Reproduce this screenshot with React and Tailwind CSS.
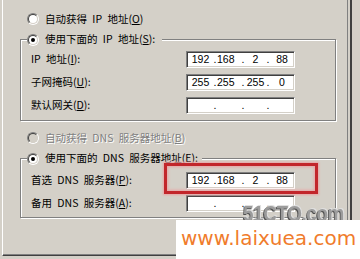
import React from "react";

// Win2000-style TCP/IP properties panel with a red annotation and watermarks

const Radio = ({ checked, disabled }) => (
  <span className="flex h-[12px] w-[12px] shrink-0 rounded-full border border-t-[#808080] border-l-[#808080] border-r-white border-b-white">
    <span
      className={
        disabled
          ? "flex h-full w-full items-center justify-center rounded-full border border-t-[#404040] border-l-[#404040] border-r-[#d4d0c8] border-b-[#d4d0c8] bg-[#d4d0c8]"
          : "flex h-full w-full items-center justify-center rounded-full border border-t-[#404040] border-l-[#404040] border-r-[#d4d0c8] border-b-[#d4d0c8] bg-white"
      }
    >
      {checked && <span className="h-[4px] w-[4px] rounded-full bg-black" />}
    </span>
  </span>
);

const Acc = ({ text, k, tail = "" }) => (
  <span className="whitespace-nowrap [word-spacing:3px]">
    {text}(<span className="underline underline-offset-1">{k}</span>){tail}
  </span>
);

const IpBox = ({ parts }) => {
  const v = parts || ["", "", "", ""];
  return (
    <div className="flex h-[17px] w-[109px] shrink-0 items-center border border-t-[#808080] border-l-[#808080] border-r-white border-b-white bg-white pl-[1px] font-['Liberation_Sans',sans-serif] text-[10.5px] leading-none text-black shadow-[inset_1px_1px_0_#404040,inset_-1px_-1px_0_#d4d0c8]">
      <span className="w-[25px] text-center">{v[0]}</span>
      <span className="w-[4px] text-center">.</span>
      <span className="w-[16px] text-center">{v[1]}</span>
      <span className="w-[8px]" />
      <span className="w-[4px] text-center">.</span>
      <span className="w-[21px] text-center">{v[2]}</span>
      <span className="w-[4px] text-center">.</span>
      <span className="w-[24px] text-center">{v[3]}</span>
    </div>
  );
};

const Row = ({ label, parts }) => (
  <div className="flex h-[17px] items-center">
    <div className="w-[155px] leading-none">{label}</div>
    <IpBox parts={parts} />
  </div>
);

const App = () => {
  return (
    <div className="relative flex h-[259px] w-[360px] overflow-hidden bg-[#d4d0c8] font-['Noto_Sans_CJK_SC',sans-serif] text-[10.5px] text-black">
      <div className="ml-[2px] flex h-[256px] w-[346px] flex-col border-b border-l border-r border-b-[#404040] border-l-white border-r-[#808080] shadow-[inset_0_-1px_0_#808080]">
        <div className="mt-[12px] flex h-[14px] items-center gap-[6px] pl-[24px] leading-none">
          <Radio />
          <Acc text="自动获得 IP 地址" k="O" />
        </div>

        <fieldset className="ml-[17px] mt-[6px] w-[316px] border border-[#808080] pb-[6px] shadow-[1px_1px_0_white,inset_1px_1px_0_white]">
          <legend className="ml-[6px] flex h-[15px] items-center gap-[6px] bg-[#d4d0c8] pr-[7px] leading-none">
            <Radio checked />
            <Acc text="使用下面的 IP 地址" k="S" tail=":" />
          </legend>
          <div className="mt-[4px] flex flex-col gap-[6px] pl-[10px]">
            <Row label={<Acc text="IP 地址" k="I" tail=":" />} parts={["192", "168", "2", "88"]} />
            <Row label={<Acc text="子网掩码" k="U" tail=":" />} parts={["255", "255", "255", "0"]} />
            <Row label={<Acc text="默认网关" k="D" tail=":" />} />
          </div>
        </fieldset>

        <div className="mt-[10px] flex h-[14px] items-center gap-[6px] pl-[24px] leading-none text-[#808080] [text-shadow:1px_1px_0_white]">
          <Radio disabled />
          <Acc text="自动获得 DNS 服务器地址" k="B" />
        </div>

        <fieldset className="ml-[17px] mt-[6px] w-[316px] border border-[#808080] pb-[5px] shadow-[1px_1px_0_white,inset_1px_1px_0_white]">
          <legend className="ml-[6px] flex h-[15px] items-center gap-[6px] bg-[#d4d0c8] pr-[4px] leading-none">
            <Radio checked />
            <Acc text="使用下面的 DNS 服务器地址" k="E" tail=":" />
          </legend>
          <div className="mt-[6px] flex flex-col gap-[6px] pl-[10px]">
            <Row label={<Acc text="首选 DNS 服务器" k="P" tail=":" />} parts={["192", "168", "2", "88"]} />
            <Row label={<Acc text="备用 DNS 服务器" k="A" tail=":" />} />
          </div>
        </fieldset>
      </div>
      <div className="ml-[2px] h-full w-[2px] bg-[#404040]" />

      {/* red annotation box */}
      <div className="absolute left-[164px] top-[163px] h-[31px] w-[154px] border-[3px] border-[#c2262b] shadow-[0_0_2px_1px_#eba3a3,inset_0_0_3px_1px_#eba3a3]" />

      {/* watermarks */}
      <div className="absolute left-[243px] top-[203px] origin-left scale-x-[0.86] font-['Liberation_Sans',sans-serif] text-[22px] font-bold leading-none tracking-[-0.5px] text-[#9c9c9c] [text-shadow:-1px_1px_0_#505050,1px_-1px_0_#e0e0e0]">
        51CTO.com
      </div>
      <div className="absolute left-[176px] top-[220px] h-[39px] w-[184px] bg-white pl-[5px] pt-[7px] font-['DejaVu_Sans',sans-serif] text-[20px] leading-[22px] text-[#f07c2c]">
        www.laixuea.com
      </div>
    </div>
  );
};

export default App;
